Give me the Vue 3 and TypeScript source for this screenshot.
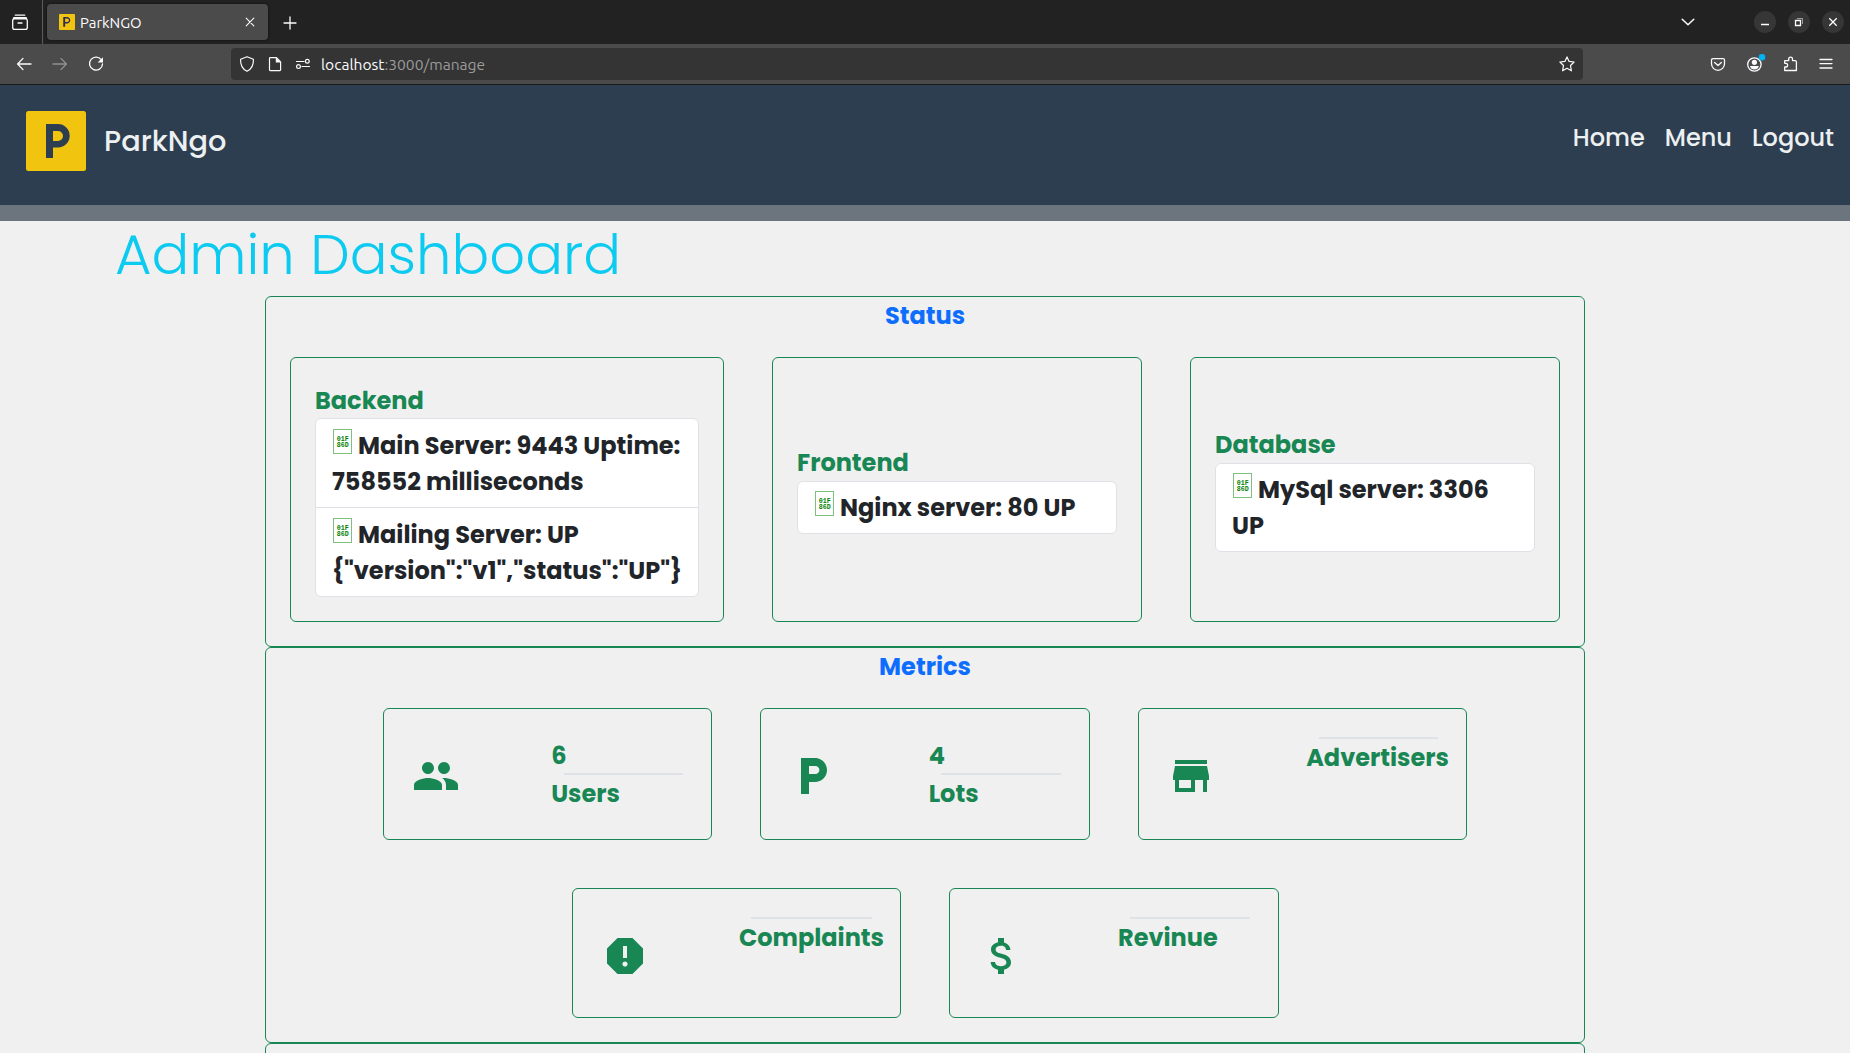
<script setup lang="ts">
interface Line { text: string; glyph?: boolean }
interface Service { name: string; wide?: boolean; items: Line[][] }
interface Metric { label: string; value?: number; icon: string }

const links = ['Home', 'Menu', 'Logout']

const services: Service[] = [
  {
    name: 'Backend', wide: true,
    items: [
      [{ text: 'Main Server: 9443 Uptime:', glyph: true }, { text: '758552 milliseconds' }],
      [{ text: 'Mailing Server: UP', glyph: true }, { text: '{"version":"v1","status":"UP"}' }],
    ],
  },
  { name: 'Frontend', items: [[{ text: 'Nginx server: 80 UP', glyph: true }]] },
  { name: 'Database', items: [[{ text: 'MySql server: 3306', glyph: true }, { text: 'UP' }]] },
]

const metricRows: Metric[][] = [
  [
    { label: 'Users', value: 6, icon: 'M16 11c1.66 0 2.99-1.34 2.99-3S17.66 5 16 5c-1.66 0-3 1.34-3 3s1.34 3 3 3zm-8 0c1.66 0 2.99-1.34 2.99-3S9.66 5 8 5C6.34 5 5 6.34 5 8s1.34 3 3 3zm0 2c-2.33 0-7 1.17-7 3.5V19h14v-2.5c0-2.33-4.67-3.5-7-3.5zm8 0c-.29 0-.62.02-.97.05 1.16.84 1.97 1.97 1.97 3.45V19h6v-2.5c0-2.33-4.67-3.5-7-3.5z' },
    { label: 'Lots', value: 4, icon: 'M13 3H6v18h4v-6h3c3.31 0 6-2.69 6-6s-2.69-6-6-6zm.2 8H10V7h3.2c1.1 0 2 .9 2 2s-.9 2-2 2z' },
    { label: 'Advertisers', icon: 'M20 4H4v2h16V4zm1 10v-2l-1-5H4l-1 5v2h1v6h10v-6h4v6h2v-6h1zm-9 4H6v-4h6v4z' },
  ],
  [
    { label: 'Complaints', icon: 'M15.73 3H8.27L3 8.27v7.46L8.27 21h7.46L21 15.73V8.27L15.73 3zM12 17.3c-.72 0-1.3-.58-1.3-1.3 0-.72.58-1.3 1.3-1.3.72 0 1.3.58 1.3 1.3 0 .72-.58 1.3-1.3 1.3zm1-4.3h-2V7h2v6z' },
    { label: 'Revinue', icon: 'M11.8 10.9c-2.27-.59-3-1.2-3-2.15 0-1.09 1.01-1.85 2.7-1.85 1.78 0 2.44.85 2.5 2.1h2.21c-.07-1.72-1.12-3.3-3.21-3.81V3h-3v2.16c-1.94.42-3.5 1.68-3.5 3.61 0 2.31 1.91 3.46 4.7 4.13 2.5.6 3 1.48 3 2.41 0 .69-.49 1.79-2.7 1.79-2.06 0-2.87-.92-2.98-2.1h-2.2c.12 2.19 1.76 3.42 3.68 3.83V21h3v-2.15c1.95-.37 3.5-1.5 3.5-3.55 0-2.84-2.43-3.81-4.7-4.4z' },
  ],
]
</script>

<template>
  <div class="window">
    <div class="tabbar">
      <svg class="ico view" viewBox="0 0 20 20"><path d="M5.2 3.1h9.6M3.5 6.2q0-.6.8-.6h11.4q.8 0 .8.6M2.7 8.5q0-1.7 1.7-1.7h11.2q1.7 0 1.7 1.7v6.9q0 1.9-1.9 1.9H4.6q-1.9 0-1.9-1.9zM8 11h4" /></svg>
      <div class="divider"></div>
      <div class="tab">
        <svg class="favicon" viewBox="0 0 60 60"><rect width="60" height="60" rx="3" fill="#f1c40f" /><path fill="#2c2c54" fill-rule="evenodd" d="M16 11h17a13 13 0 0 1 0 25H23v12h-7zm7 6v13h8a6.5 6.5 0 0 0 0-13z" /></svg>
        <span class="tab-title">ParkNGO</span>
        <svg class="ico close" viewBox="0 0 20 20"><path d="M6.2 6.2l7.6 7.6M13.8 6.2l-7.6 7.6" /></svg>
      </div>
      <svg class="ico plus" viewBox="0 0 20 20"><path d="M10 4v12M4 10h12" /></svg>
      <svg class="ico chevron" viewBox="0 0 20 20"><path d="M4.2 7.2L10 12.8l5.8-5.6" /></svg>
      <div class="controls">
        <svg viewBox="0 0 22 22"><path d="M7 13.5h8" /></svg>
        <svg viewBox="0 0 22 22"><path d="M7.5 9.5h5v5h-5z" /><path opacity=".5" stroke-width="1" d="M9 7.5h5.5v5.5" /></svg>
        <svg viewBox="0 0 22 22"><path d="M7.3 7.3l7.4 7.4M14.7 7.3l-7.4 7.4" /></svg>
      </div>
    </div>

    <div class="toolbar">
      <svg class="ico" viewBox="0 0 20 20"><path d="M17 10H3.8M9 4.4L3.6 10 9 15.6" /></svg>
      <svg class="ico dim" viewBox="0 0 20 20"><path d="M3 10h13.2M11 4.4l5.4 5.6-5.4 5.6" /></svg>
      <svg class="ico" viewBox="0 0 20 20"><path d="M15.6 6.3A6.5 6.5 0 1 0 16.5 10" /><path class="solid" d="M17 3.2v5.4h-5.4z" /></svg>
      <div class="urlbar">
        <svg class="ico" viewBox="0 0 20 20"><path d="M10 2.7l6.4 2.5c.3 5.2-1.6 9.7-6.4 12.1C5.2 14.9 3.3 10.4 3.6 5.2z" /></svg>
        <svg class="ico" viewBox="0 0 20 20"><path d="M5.3 3.7h6.2l4.1 4.1v8q0 .8-.8.8H5.3q-.8 0-.8-.8V4.5q0-.8.8-.8z" /><path class="solid" d="M10.8 3.3v5.2h5.2z" /></svg>
        <svg class="ico" viewBox="0 0 20 20"><path d="M3.5 7.5h7.5M9 12.5h7.5" /><circle cx="14.3" cy="7.3" r="1.9" /><circle cx="5.5" cy="12.6" r="1.9" /></svg>
        <div class="url"><span class="host">localhost</span><span>:3000/manage</span></div>
        <svg class="ico star" viewBox="0 0 20 20"><path d="M10 2.9l2.1 4.5 5 .6-3.6 3.5.9 5.3L10 14.3l-4.4 2.5.9-5.3L2.9 8l5-.6z" /></svg>
      </div>
      <div class="actions">
        <svg class="ico" viewBox="0 0 20 20"><path d="M4.9 4.6h10.2q1.4 0 1.4 1.4v3.8a6.5 6.5 0 0 1-13 0V6q0-1.4 1.4-1.4zM6.6 8.4l3.4 3.1 3.4-3.1" /></svg>
        <svg class="ico account" viewBox="0 0 20 20"><circle cx="10.4" cy="10.5" r="6.7" /><circle class="solid" cx="10.4" cy="8.3" r="2.6" /><path class="solid" d="M6 12h8.8q-.8 3.5-4.4 3.5T6 12z" /><circle class="badge" cx="18" cy="3.2" r="3.3" /></svg>
        <svg class="ico" viewBox="0 0 20 20"><path d="M4.7 6.6h4V5a1.9 1.9 0 0 1 3.8 0v1.6h2.6q1.3 0 1.3 1.3v8.6H4.7V13h1.5a1.9 1.9 0 0 0 0-3.7H4.7z" /></svg>
        <svg class="ico" viewBox="0 0 20 20"><path d="M4 5.5h12M4 9.6h12M4 14h12" /></svg>
      </div>
    </div>

    <header class="header">
      <svg class="logo" viewBox="0 0 60 60"><rect width="60" height="60" rx="2.5" fill="#f1c40f" /><path fill="#2c3e50" fill-rule="evenodd" d="M20 13h12a11.7 11.7 0 0 1 0 23.4h-5V47h-7zm7 7v10h5a5 5 0 0 0 0-10z" /></svg>
      <span class="brand">ParkNgo</span>
      <nav class="nav">
        <a v-for="l in links" :key="l">{{ l }}</a>
      </nav>
    </header>
    <div class="band"></div>

    <h1 class="title">Admin Dashboard</h1>

    <main class="panels">
      <section class="panel">
        <h2>Status</h2>
        <div class="row">
          <article v-for="s in services" :key="s.name" class="service" :class="{ wide: s.wide }">
            <h3>{{ s.name }}</h3>
            <ul>
              <li v-for="(item, i) in s.items" :key="i">
                <div v-for="line in item" :key="line.text" class="line">
                  <svg v-if="line.glyph" class="hex" viewBox="0 0 19 25">
                    <rect x=".5" y=".5" width="18" height="24" />
                    <text x="3.7" y="12" textLength="12" lengthAdjust="spacingAndGlyphs">01F</text>
                    <text x="3.7" y="18" textLength="12" lengthAdjust="spacingAndGlyphs">86D</text>
                  </svg>
                  <span>{{ line.text }}</span>
                </div>
              </li>
            </ul>
          </article>
        </div>
      </section>

      <section class="panel">
        <h2>Metrics</h2>
        <div v-for="(row, r) in metricRows" :key="r" class="row centered">
          <article v-for="m in row" :key="m.label" class="metric">
            <svg viewBox="0 0 24 24"><path :d="m.icon" /></svg>
            <div class="figures">
              <div v-if="m.value !== undefined" class="figure">{{ m.value }}</div>
              <div class="rule"></div>
              <div class="figure">{{ m.label }}</div>
            </div>
          </article>
        </div>
      </section>

      <section class="panel next"></section>
    </main>
  </div>
</template>

<style>
body { background: #f0f0f0; }
</style>

<style scoped>
.window {
  height: 1053px;
  overflow: hidden;
  background: #f0f0f0;
  font-family: Poppins, Inter, "Liberation Sans", sans-serif;
}
.window *, .window { box-sizing: border-box; }
h1, h2, h3, ul { margin: 0; padding: 0; list-style: none; }
span, a { white-space: nowrap; }
svg { display: block; flex: none; }

.ico {
  width: 20px;
  height: 20px;
  fill: none;
  stroke: #fbfbfe;
  stroke-width: 1.3;
  stroke-linecap: round;
  stroke-linejoin: round;
  overflow: visible;
}
.ico.dim { opacity: .4; }
.solid { fill: #fbfbfe; stroke: none; }
.badge { fill: #00b3f4; stroke: none; }

.tabbar {
  display: flex;
  align-items: center;
  height: 44px;
  padding: 0 6px 0 10px;
  background: #222;
}
.divider { width: 1px; height: 44px; margin: 0 4px 0 12px; background: #5c5c5c; }
.tab {
  display: flex;
  align-items: center;
  width: 221px;
  height: 36px;
  padding: 0 8px 0 12px;
  border-radius: 4px;
  background: #4b4b4b;
  box-shadow: 0 0 3px rgba(0, 0, 0, .6);
}
.favicon { width: 16px; height: 16px; }
.tab-title, .url { font-family: Ubuntu, "Noto Sans", sans-serif; font-size: 14.9px; color: #fbfbfe; }
.tab-title { margin-left: 5px; padding-top: 1px; line-height: 20px; }
.close { margin-left: auto; stroke-width: 1.1; }
.plus { margin-left: 12px; margin-top: 1px; }
.chevron { margin-left: auto; margin-right: 56px; stroke-width: 1.5; }
.controls { display: flex; gap: 12px; }
.controls svg {
  width: 22px;
  height: 22px;
  border-radius: 50%;
  background: #363636;
  fill: none;
  stroke: #fff;
  stroke-width: 1.3;
}

.toolbar {
  display: flex;
  align-items: center;
  gap: 16px;
  height: 41px;
  padding: 0 14px;
  background: #4b4b4b;
  border-bottom: 1px solid #1a1a1a;
}
.urlbar {
  display: flex;
  align-items: center;
  gap: 8px;
  width: 1352px;
  height: 32px;
  margin-left: 109px;
  padding: 0 6px;
  border-radius: 4px;
  background: #343434;
}
.urlbar .ico { stroke-width: 1.2; }
.url { display: flex; font-size: 15.6px; line-height: 20px; color: #9a9a9a; }
.host { color: #fbfbfe; }
.star { margin-left: auto; }
.actions { display: flex; gap: 16px; margin-left: auto; }

.header {
  display: flex;
  align-items: flex-start;
  height: 120px;
  padding: 26px 16px 0 26px;
  background: #2c3e50;
  color: #ecf0f1;
  font-weight: 500;
}
.logo { width: 60px; height: 60px; }
.brand { margin: 8px 0 0 18px; font-size: 28.8px; line-height: 44px; }
.nav { display: flex; gap: 20px; margin: 8px 0 0 auto; font-size: 24px; line-height: 37px; }
.band { height: 16px; background: #6c757d; }

.title {
  height: 75px;
  padding-left: 115px;
  font-size: 56px;
  font-weight: 300;
  line-height: 67px;
  color: #0dcaf0;
}

.panels { width: 1320px; margin: 0 auto; font-size: 24px; font-weight: 700; line-height: 37px; }
.panel { border: 1px solid #198754; border-radius: 6px; padding-bottom: 24px; }
.panel.next { height: 60px; }
h2, h3 { font-size: inherit; font-weight: 700; }
h2 { text-align: center; color: #0d6efd; height: 36px; }
h3 { color: #198754; height: 36px; }
.row { display: flex; gap: 48px; padding: 24px 24px 0; }
.row.centered { justify-content: center; }
.row.centered + .row.centered { padding-top: 48px; }

.service {
  display: flex;
  flex-direction: column;
  justify-content: center;
  width: 370px;
  height: 265px;
  padding: 0 24px;
  border: 1px solid #198754;
  border-radius: 6px;
}
.service.wide { width: 434px; }
.service:not(.wide) h3 { height: 36.2px; margin-top: -.2px; }
ul { border: 1px solid #dee2e6; border-radius: 6px; background: #fff; color: #212529; }
li { padding: 8px 0 8px 16px; }
.service:not(.wide) li { padding: 7.8px 0 8.2px 16px; }
li + li { border-top: 1px solid #dee2e6; }
.line { display: flex; height: 36px; }
.hex { width: 19px; height: 25px; margin: 2px 6px 0 1px; }
.hex rect { fill: #fff; stroke: #7fbf7f; }
.hex text { font: 700 7.5px "Liberation Mono", monospace; fill: #008000; }

.metric {
  display: flex;
  align-items: flex-start;
  width: 329.5px;
  height: 132px;
  padding: 28px 16px 0 28px;
  border: 1px solid #198754;
  border-radius: 6px;
  color: #198754;
}
.row.centered + .row.centered .metric { height: 130px; }
.metric svg { width: 48px; height: 48px; margin-top: 15px; fill: #198754; }
.figures { min-width: 143.5px; margin-left: auto; }
.figure { height: 36px; margin-left: -.6px; }
.row.centered + .row.centered .figure { margin-left: 0; }
.rule { height: 2px; margin: 0 12px; background: #dee2e6; }
</style>
